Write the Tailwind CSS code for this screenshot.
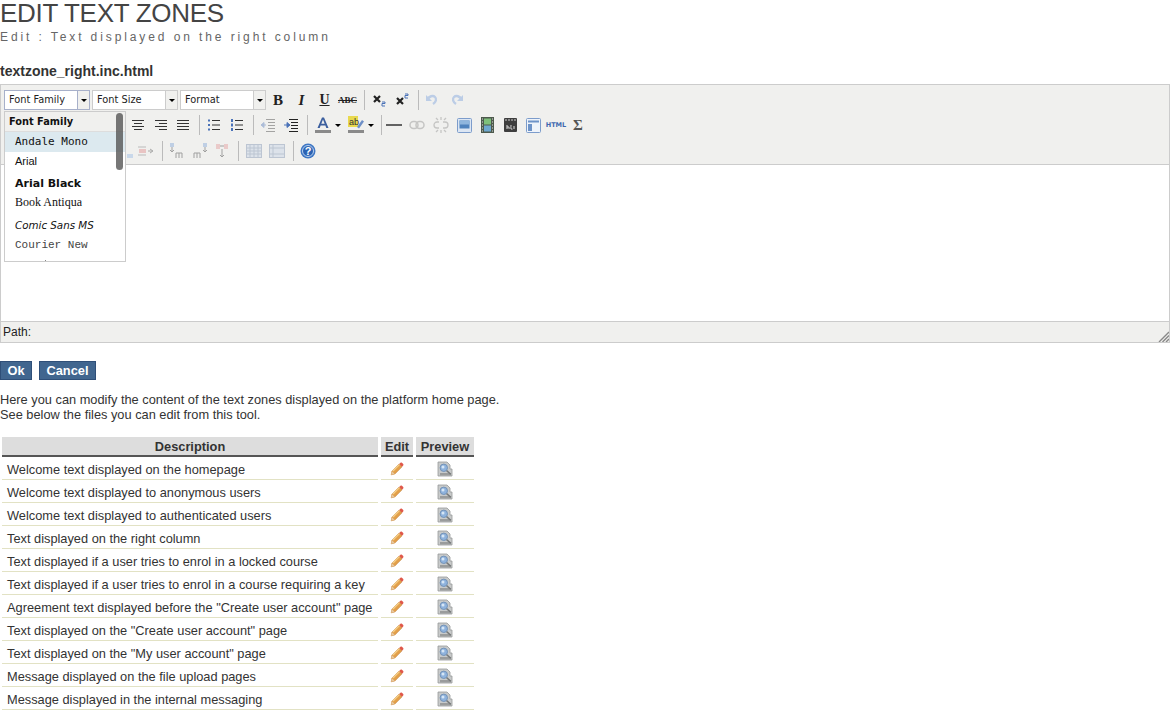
<!DOCTYPE html>
<html><head><meta charset="utf-8"><title>Edit text zones</title>
<script src="https://cdn.jsdelivr.net/npm/@tailwindcss/browser@4"></script></head>
<body class="bg-white text-[#333] font-['Liberation_Sans',Arial,sans-serif] overflow-hidden h-[727px]">
<svg class="hidden" width="0" height="0">
<defs>
<symbol id="pencil" viewBox="0 0 14 14"><path d="M1.2 12.8l.8-3.6L9.2 2l2.8 2.8-7.2 7.2z" fill="#e3a04a" stroke="#c07a30" stroke-width=".6"/><path d="M3 9l6.7-6.7" stroke="#f5d08a" stroke-width="1.2"/><path d="M1.2 12.8l.8-3.6 2.8 2.8z" fill="#e8c9a0"/><path d="M9.2 2l1.3-1.3c.5-.4 1-.4 1.4 0l1.3 1.3c.4.4.4 1 0 1.4L12 4.8z" fill="#e0584a"/></symbol>
<symbol id="preview" viewBox="0 0 16 16"><path d="M1 1h9l3 3v4h2v7H1z" fill="#c8caca" stroke="#979999" stroke-width=".8"/><path d="M3 12h11v2.500H3z" fill="#9a9c9c"/><circle cx="6.800" cy="6.800" r="3.700" fill="#8fb3dd" stroke="#7493b8"/><circle cx="6" cy="6" r="1.500" fill="#d6e6f5"/><path d="M9.600 9.600l4.200 3.600" stroke="#777a7a" stroke-width="1.500"/></symbol>
</defs></svg>

<h1 class="text-[26px] leading-[27px] tracking-[-0.3px] font-normal text-[#444]">EDIT TEXT ZONES</h1>
<p class="mt-[3px] text-[12px] leading-[14px] tracking-[2.9px] text-[#666]">Edit : Text displayed on the right column</p>
<h2 class="mt-[19px] text-[14px] leading-[16px] font-bold text-[#333]">textzone_right.inc.html</h2>

<div class="relative mt-[5px] h-[259px] border border-[#ccc] flex flex-col">
  <div class="h-[80px] bg-[#f0f0ee] border-b border-[#ccc] shrink-0 font-['DejaVu_Sans',sans-serif] text-[9.800px] text-[#222] pt-[5px]">
    <!-- row 1 -->
    <div class="flex items-center h-[20px] pl-[3px]">
      <div class="flex w-[86px] h-[20px]"><div class="flex-1 bg-white border border-[#a7b0ca] pl-1 leading-[18px]">Font Family</div><div class="w-[12px] border border-l-0 border-[#a7b0ca] bg-[#f0f0ee] flex items-center justify-center"><span class="border-x-[3px] border-t-[3px] border-x-transparent border-t-black"></span></div></div>
      <div class="flex w-[86px] h-[20px] ml-[2px]"><div class="flex-1 bg-white border border-[#ccc] pl-1 leading-[18px]">Font Size</div><div class="w-[12px] border border-l-0 border-[#ccc] flex items-center justify-center"><span class="border-x-[3px] border-t-[3px] border-x-transparent border-t-black"></span></div></div>
      <div class="flex w-[86px] h-[20px] ml-[2px]"><div class="flex-1 bg-white border border-[#ccc] pl-1 leading-[18px]">Format</div><div class="w-[12px] border border-l-0 border-[#ccc] flex items-center justify-center"><span class="border-x-[3px] border-t-[3px] border-x-transparent border-t-black"></span></div></div>
      <div class="w-[24px] text-center font-['Liberation_Serif',serif] font-black text-[15px] leading-[20px]">B</div>
      <div class="w-[23px] text-center font-['Liberation_Serif',serif] font-bold italic text-[15px] leading-[20px]">I</div>
      <div class="w-[23px] text-center font-['Liberation_Serif',serif] font-bold underline text-[14px] leading-[20px]">U</div>
      <div class="w-[23px] text-center font-['Liberation_Serif',serif] font-bold line-through text-[9px] leading-[20px]">ABC</div>
      <div class="w-px h-[20px] bg-[#bbb] ml-[5px] mr-[3px]"></div>
      <div class="w-[23px] flex justify-center"><svg width="16" height="16" viewBox="0 0 16 16"><path d="M2 4l6 6M8 4l-6 6" stroke="#222" stroke-width="2.200"/><path d="M10 10h3v1.500h-3V14h3" fill="none" stroke="#4a72b8"/></svg></div>
      <div class="w-[23px] flex justify-center"><svg width="16" height="16" viewBox="0 0 16 16"><path d="M2 6l6 6M8 6l-6 6" stroke="#222" stroke-width="2.200"/><path d="M10 2h3v1.500h-3V6h3" fill="none" stroke="#4a72b8"/></svg></div>
      <div class="w-px h-[20px] bg-[#bbb] ml-[4px] mr-[1px]"></div>
      <div class="w-[24px] flex justify-center"><svg width="16" height="16" viewBox="0 0 16 16"><path d="M3 8c2-4 6-5 8-3 2 2 1 5-2 7" fill="none" stroke="#bccde6" stroke-width="2.400"/><path d="M2 3v6h6z" fill="#bccde6"/></svg></div>
      <div class="w-[25px] flex justify-center"><svg width="16" height="16" viewBox="0 0 16 16"><path d="M13 8c-2-4-6-5-8-3-2 2-1 5 2 7" fill="none" stroke="#bccde6" stroke-width="2.400"/><path d="M14 3v6H8z" fill="#bccde6"/></svg></div>
    </div>
    <!-- row 2 -->
    <div class="flex items-center h-[20px] mt-[6px] pl-[125px] -translate-y-px">
      <div class="w-[23px] flex justify-center"><svg width="14" height="12"><path d="M1 1.500h12M3 4.500h8M1 7.500h12M3 10.500h8" stroke="#333"/></svg></div>
      <div class="w-[23px] flex justify-center"><svg width="14" height="12"><path d="M1 1.500h12M5 4.500h8M1 7.500h12M5 10.500h8" stroke="#333"/></svg></div>
      <div class="w-[22px] flex justify-center"><svg width="14" height="12"><path d="M1 1.500h12M1 4.500h12M1 7.500h12M1 10.500h12" stroke="#333"/></svg></div>
      <div class="w-px h-[20px] bg-[#bbb] ml-[5px] mr-[2px]"></div>
      <div class="w-[23px] flex justify-center"><svg width="14" height="14"><path d="M5 2.500h8M5 7h8M5 11.500h8" stroke="#333"/><path d="M1 1.500h2v2H1zM1 6h2v2H1zM1 10.500h2v2H1z" fill="#4a72b8"/></svg></div>
      <div class="w-[23px] flex justify-center"><svg width="14" height="14"><path d="M5 2.500h8M5 7h8M5 11.500h8" stroke="#333"/><path d="M1 1h2v3H1zM1 5.500h2v3H1zM1 10h2v3H1z" fill="#4a72b8"/></svg></div>
      <div class="w-px h-[20px] bg-[#bbb] ml-[5px] mr-[2px]"></div>
      <div class="w-[23px] flex justify-center opacity-40"><svg width="16" height="14"><path d="M6 1.500h9M8 4.500h7M8 7.500h7M8 10.500h7M6 13.500h9" stroke="#333"/><path d="M6 7H3M4 4.500L1 7l3 2.500z" fill="#4a72b8" stroke="#4a72b8"/></svg></div>
      <div class="w-[23px] flex justify-center"><svg width="16" height="14"><path d="M6 1.500h9M8 4.500h7M8 7.500h7M8 10.500h7M6 13.500h9" stroke="#222"/><path d="M1 7h3M4 4.500L7 7l-3 2.500z" fill="#4a72b8" stroke="#4a72b8"/></svg></div>
      <div class="w-px h-[20px] bg-[#bbb] ml-[5px] mr-[3px]"></div>
      <div class="w-[23px] flex justify-center"><svg width="16" height="18"><path d="M2.500 12L7 1.500h2L13.500 12h-2.200l-.9-2.500H5.600L4.700 12zM6.300 7.700h3.400L8 3.500z" fill="#3c5f9e"/><path d="M0 14h16v3H0z" fill="#8a8a8a"/></svg></div>
      <div class="w-[7px] flex justify-center"><span class="border-x-[3px] border-t-[3px] border-x-transparent border-t-black"></span></div>
      <div class="w-[21px] ml-[5px] flex justify-center"><svg width="17" height="18"><path d="M0 0h10v11H0z" fill="#e8d94e"/><text x="1" y="9" font-size="9" font-family="Liberation Sans" fill="#333">ab</text><path d="M9 11l5-7 2 1.500-5 7z" fill="#6d8fc7"/><path d="M0 14h16v3H0z" fill="#8a8a8a"/></svg></div>
      <div class="w-[7px] flex justify-center"><span class="border-x-[3px] border-t-[3px] border-x-transparent border-t-black"></span></div>
      <div class="w-px h-[20px] bg-[#bbb] ml-[7px] mr-[1px]"></div>
      <div class="w-[22px] flex justify-center"><svg width="16" height="4"><path d="M0 2h16" stroke="#333" stroke-width="1.500"/></svg></div>
      <div class="w-[23px] flex justify-center opacity-35"><svg width="16" height="10"><rect x="1" y="1.500" width="8" height="7" rx="3.500" fill="none" stroke="#777" stroke-width="1.500"/><rect x="7" y="1.500" width="8" height="7" rx="3.500" fill="none" stroke="#777" stroke-width="1.500"/></svg></div>
      <div class="w-[25px] flex justify-center opacity-35"><svg width="16" height="16"><path d="M6 5H4a3 3 0 0 0 0 6h2M10 5h2a3 3 0 0 1 0 6h-2M8 0v3M8 13v3M3 1l2 2M13 1l-2 2M3 15l2-2M13 15l-2-2" fill="none" stroke="#777" stroke-width="1.300"/></svg></div>
      <div class="w-[23px] flex justify-center"><svg width="15" height="15"><rect x=".5" y=".5" width="14" height="14" rx="1" fill="#dce6f3" stroke="#7c9ccb"/><rect x="2.500" y="2.500" width="10" height="8" fill="#4f83bd"/><rect x="2.500" y="2.500" width="10" height="4" fill="#8fb6dd"/></svg></div>
      <div class="w-[23px] flex justify-center"><svg width="13" height="16"><rect width="13" height="16" fill="#4d5a4d"/><rect x="3" y="1.500" width="7" height="6" fill="#7ec07a"/><rect x="3" y="8.500" width="7" height="6" fill="#6ea8cf"/><path d="M1 2h1M1 5h1M1 8h1M1 11h1M1 14h1M11 2h1M11 5h1M11 8h1M11 11h1M11 14h1" stroke="#ddd"/></svg></div>
      <div class="w-[23px] flex justify-center"><svg width="13" height="14"><rect width="13" height="14" rx="1" fill="#3e3e3e"/><path d="M1 2h11" stroke="#ccc" stroke-dasharray="2 1"/><path d="M3 7v4M3 9h2v2M7 7v4h1.500M10 8v3" stroke="#ddd"/></svg></div>
      <div class="w-[23px] flex justify-center"><svg width="15" height="15"><rect x=".5" y=".5" width="14" height="14" rx="1" fill="#eef3fa" stroke="#7c9ccb"/><rect x="2" y="2.500" width="11" height="2" fill="#6d93c8"/><rect x="2" y="6" width="4" height="7" fill="#6d93c8"/></svg></div>
      <div class="w-[22px] text-center font-['DejaVu_Sans',sans-serif] font-bold text-[6.500px] leading-[20px] text-[#3f68ae]">HTML</div>
      <div class="w-[22px] text-center font-['Liberation_Serif',serif] font-bold text-[15px] leading-[20px] text-[#555]">Σ</div>
    </div>
    <!-- row 3 -->
    <div class="flex items-center h-[20px] mt-[6px] pl-[126px] -translate-y-px">
      <div class="w-[7px] flex items-end h-[14px]"><svg width="6" height="4"><rect width="6" height="4" fill="#c9d8ea"/></svg></div>
      <div class="w-[23px] flex justify-center opacity-50"><svg width="18" height="14"><path d="M1 3h8M1 11h8" stroke="#888"/><path d="M2 5h7v4H2z" fill="#e39a9a"/><path d="M11 7h4M13 5l3 2-3 2" fill="none" stroke="#666"/></svg></div>
      <div class="w-px h-[20px] bg-[#bbb] ml-[5px] mr-[2px]"></div>
      <div class="w-[23px] flex justify-center opacity-50"><svg width="16" height="16"><rect x="1" y="0" width="4" height="4" fill="#8fb0dc"/><path d="M3 4v5M1 7l2 2 2-2" fill="none" stroke="#555"/><path d="M7 15v-5h3v5M10 10h3v5" fill="none" stroke="#555"/></svg></div>
      <div class="w-[23px] flex justify-center opacity-50"><svg width="16" height="16"><rect x="11" y="0" width="4" height="4" fill="#8fb0dc"/><path d="M13 4v5M11 7l2 2 2-2" fill="none" stroke="#555"/><path d="M2 15v-5h3v5M5 10h3v5" fill="none" stroke="#555"/></svg></div>
      <div class="w-[21px] flex justify-center opacity-50"><svg width="14" height="16"><path d="M1 1h4v5H1zM9 1h4v5H9z" fill="#e5a5a5"/><path d="M5 3h4M7 6v8M5 12l2 2 2-2" fill="none" stroke="#555"/></svg></div>
      <div class="w-px h-[20px] bg-[#bbb] ml-[6px] mr-[3px]"></div>
      <div class="w-[23px] flex justify-center opacity-50"><svg width="16" height="14"><rect x=".5" y=".5" width="15" height="13" fill="#c9d6e8" stroke="#8a9cb8"/><path d="M.5 4h15M.5 7h15M.5 10h15M4 .5v13M8 .5v13M12 .5v13" stroke="#8a9cb8"/></svg></div>
      <div class="w-[23px] flex justify-center opacity-50"><svg width="16" height="14"><rect x=".5" y=".5" width="15" height="13" fill="#c9d6e8" stroke="#8a9cb8"/><path d="M.5 4h15M.5 10h15M4 .5v13" stroke="#8a9cb8"/></svg></div>
      <div class="w-px h-[20px] bg-[#bbb] ml-[5px] mr-[3px]"></div>
      <div class="w-[22px] flex justify-center"><svg width="16" height="16"><circle cx="8" cy="8" r="7.500" fill="#3f77c4"/><circle cx="8" cy="8" r="5.500" fill="#2b62b3" stroke="#b8d0ee"/><text x="8" y="12" text-anchor="middle" font-size="11" font-weight="700" font-family="Liberation Sans" fill="#fff">?</text></svg></div>
    </div>
  </div>
  <div class="flex-1 bg-white"></div>
  <div class="relative h-[21px] shrink-0 bg-[#f0f0ee] border-t border-[#ccc] text-[12px] leading-[20px] pl-[2px] text-[#222]">Path:
    <svg class="absolute right-0 bottom-0" width="11" height="11"><path d="M11 1L1 11M11 4.500L4.500 11M11 8L8 11" stroke="#888" stroke-width="1.400"/></svg>
  </div>

  <!-- font dropdown -->
  <div class="absolute left-[3px] top-[26px] w-[122px] h-[151px] bg-white border border-[#ccc] overflow-hidden text-[#111] font-['DejaVu_Sans',sans-serif] text-[9.800px]">
    <div class="h-[20px] bg-[#f0f0ee] border-b border-[#ddd] pl-[4px] font-bold leading-[20px]">Font Family</div>
    <div class="h-[20px] bg-[#dce9ef] pl-[10px] font-['DejaVu_Sans_Mono',monospace] text-[11px] leading-[20px]">Andale Mono</div>
    <div class="h-[20px] pl-[10px] font-['Liberation_Sans',sans-serif] text-[11px] leading-[18px]">Arial</div>
    <div class="h-[23px] pl-[10px] font-['DejaVu_Sans',sans-serif] font-black text-[11px] leading-[24px]">Arial Black</div>
    <div class="h-[20px] pl-[10px] font-['Liberation_Serif',serif] text-[12px] leading-[14px]">Book Antiqua</div>
    <div class="h-[22px] pl-[10px] font-['DejaVu_Sans',sans-serif] italic text-[10.300px] leading-[20px]">Comic Sans MS</div>
    <div class="h-[20px] pl-[10px] font-['Liberation_Mono',monospace] text-[11px] leading-[16px] text-[#444]">Courier New</div>
    <div class="absolute left-[40px] bottom-0 w-px h-px bg-[#888]"></div>
    <div class="absolute right-[2px] top-[1px] w-[7px] h-[57px] rounded-[4px] bg-[#555]/80"></div>
  </div>
</div>

<div class="flex mt-[18px] gap-[7px]">
  <button class="h-[19px] w-[32px] bg-[#41668f] border border-[#2f4f78] text-white font-bold text-[12.800px] leading-[16px]">Ok</button>
  <button class="h-[19px] w-[57px] bg-[#41668f] border border-[#2f4f78] text-white font-bold text-[12.800px] leading-[16px]">Cancel</button>
</div>

<p class="mt-[12px] text-[12.800px] leading-[15px] text-[#333]">Here you can modify the content of the text zones displayed on the platform home page.<br>See below the files you can edit from this tool.</p>

<div class="mt-[15px] ml-[2px] w-[472px] grid grid-cols-[376px_32px_58px] gap-x-[3px] text-[12.800px] text-[#333]">
  <div class="h-[20px] bg-[#ddd] border-b-2 border-[#555] text-center font-bold leading-[20px]">Description</div>
  <div class="h-[20px] bg-[#ddd] border-b-2 border-[#555] text-center font-bold leading-[20px]">Edit</div>
  <div class="h-[20px] bg-[#ddd] border-b-2 border-[#555] text-center font-bold leading-[20px]">Preview</div>

  <div class="h-[23px] border-b border-[#e2e2c4] pl-[5px] leading-[26px]">Welcome text displayed on the homepage</div>
  <div class="h-[23px] border-b border-[#e2e2c4] flex items-center justify-center pt-[2px]"><svg width="14" height="14"><use href="#pencil"/></svg></div>
  <div class="h-[23px] border-b border-[#e2e2c4] flex items-center justify-center pt-[2px]"><svg width="16" height="16"><use href="#preview"/></svg></div>

  <div class="h-[23px] border-b border-[#e2e2c4] pl-[5px] leading-[26px]">Welcome text displayed to anonymous users</div>
  <div class="h-[23px] border-b border-[#e2e2c4] flex items-center justify-center pt-[2px]"><svg width="14" height="14"><use href="#pencil"/></svg></div>
  <div class="h-[23px] border-b border-[#e2e2c4] flex items-center justify-center pt-[2px]"><svg width="16" height="16"><use href="#preview"/></svg></div>

  <div class="h-[23px] border-b border-[#e2e2c4] pl-[5px] leading-[26px]">Welcome text displayed to authenticated users</div>
  <div class="h-[23px] border-b border-[#e2e2c4] flex items-center justify-center pt-[2px]"><svg width="14" height="14"><use href="#pencil"/></svg></div>
  <div class="h-[23px] border-b border-[#e2e2c4] flex items-center justify-center pt-[2px]"><svg width="16" height="16"><use href="#preview"/></svg></div>

  <div class="h-[23px] border-b border-[#e2e2c4] pl-[5px] leading-[26px]">Text displayed on the right column</div>
  <div class="h-[23px] border-b border-[#e2e2c4] flex items-center justify-center pt-[2px]"><svg width="14" height="14"><use href="#pencil"/></svg></div>
  <div class="h-[23px] border-b border-[#e2e2c4] flex items-center justify-center pt-[2px]"><svg width="16" height="16"><use href="#preview"/></svg></div>

  <div class="h-[23px] border-b border-[#e2e2c4] pl-[5px] leading-[26px]">Text displayed if a user tries to enrol in a locked course</div>
  <div class="h-[23px] border-b border-[#e2e2c4] flex items-center justify-center pt-[2px]"><svg width="14" height="14"><use href="#pencil"/></svg></div>
  <div class="h-[23px] border-b border-[#e2e2c4] flex items-center justify-center pt-[2px]"><svg width="16" height="16"><use href="#preview"/></svg></div>

  <div class="h-[23px] border-b border-[#e2e2c4] pl-[5px] leading-[26px]">Text displayed if a user tries to enrol in a course requiring a key</div>
  <div class="h-[23px] border-b border-[#e2e2c4] flex items-center justify-center pt-[2px]"><svg width="14" height="14"><use href="#pencil"/></svg></div>
  <div class="h-[23px] border-b border-[#e2e2c4] flex items-center justify-center pt-[2px]"><svg width="16" height="16"><use href="#preview"/></svg></div>

  <div class="h-[23px] border-b border-[#e2e2c4] pl-[5px] leading-[26px]">Agreement text displayed before the "Create user account" page</div>
  <div class="h-[23px] border-b border-[#e2e2c4] flex items-center justify-center pt-[2px]"><svg width="14" height="14"><use href="#pencil"/></svg></div>
  <div class="h-[23px] border-b border-[#e2e2c4] flex items-center justify-center pt-[2px]"><svg width="16" height="16"><use href="#preview"/></svg></div>

  <div class="h-[23px] border-b border-[#e2e2c4] pl-[5px] leading-[26px]">Text displayed on the "Create user account" page</div>
  <div class="h-[23px] border-b border-[#e2e2c4] flex items-center justify-center pt-[2px]"><svg width="14" height="14"><use href="#pencil"/></svg></div>
  <div class="h-[23px] border-b border-[#e2e2c4] flex items-center justify-center pt-[2px]"><svg width="16" height="16"><use href="#preview"/></svg></div>

  <div class="h-[23px] border-b border-[#e2e2c4] pl-[5px] leading-[26px]">Text displayed on the "My user account" page</div>
  <div class="h-[23px] border-b border-[#e2e2c4] flex items-center justify-center pt-[2px]"><svg width="14" height="14"><use href="#pencil"/></svg></div>
  <div class="h-[23px] border-b border-[#e2e2c4] flex items-center justify-center pt-[2px]"><svg width="16" height="16"><use href="#preview"/></svg></div>

  <div class="h-[23px] border-b border-[#e2e2c4] pl-[5px] leading-[26px]">Message displayed on the file upload pages</div>
  <div class="h-[23px] border-b border-[#e2e2c4] flex items-center justify-center pt-[2px]"><svg width="14" height="14"><use href="#pencil"/></svg></div>
  <div class="h-[23px] border-b border-[#e2e2c4] flex items-center justify-center pt-[2px]"><svg width="16" height="16"><use href="#preview"/></svg></div>

  <div class="h-[23px] border-b border-[#e2e2c4] pl-[5px] leading-[26px]">Message displayed in the internal messaging</div>
  <div class="h-[23px] border-b border-[#e2e2c4] flex items-center justify-center pt-[2px]"><svg width="14" height="14"><use href="#pencil"/></svg></div>
  <div class="h-[23px] border-b border-[#e2e2c4] flex items-center justify-center pt-[2px]"><svg width="16" height="16"><use href="#preview"/></svg></div>
</div>
</body></html>
